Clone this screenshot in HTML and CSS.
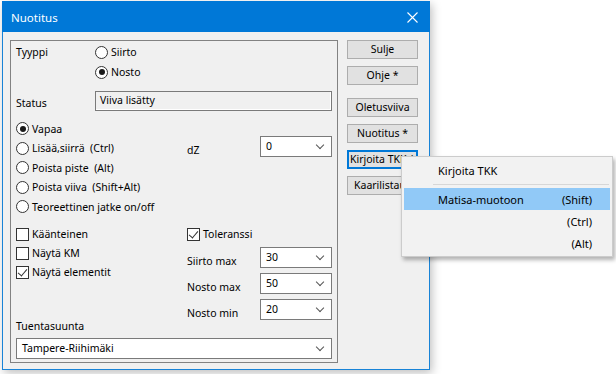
FILE: index.html
```html
<!DOCTYPE html>
<html>
<head>
<meta charset="utf-8">
<link rel="stylesheet" href="styles.css">
</head>
<body>
<div class="window">
  <div class="titlebar">
    <span class="title">Nuotitus</span>
    <svg class="close" width="11" height="11" viewBox="0 0 11 11"><path d="M0.5 0.5 L10.5 10.5 M10.5 0.5 L0.5 10.5" stroke="#fff" stroke-width="1.1" fill="none"/></svg>
  </div>
  <div class="client">
    <div class="group">
      <div class="type-row">
        <span class="label">Tyyppi</span>
        <div class="stack">
          <div class="opt"><span class="radio"></span>Siirto</div>
          <div class="opt"><span class="radio on"></span>Nosto</div>
        </div>
      </div>
      <div class="status-row">
        <span class="label status-label">Status</span>
        <div class="field">Viiva lisätty</div>
      </div>
      <div class="split mode">
        <div class="list">
          <div class="opt r"><span class="radio on"></span>Vapaa</div>
          <div class="opt r"><span class="radio"></span>Lisää,siirrä&nbsp; (Ctrl)</div>
          <div class="opt r"><span class="radio"></span>Poista piste&nbsp; (Alt)</div>
          <div class="opt r"><span class="radio"></span>Poista viiva&nbsp; (Shift+Alt)</div>
          <div class="opt r"><span class="radio"></span>Teoreettinen jatke on/off</div>
        </div>
        <div class="param dz">
          <span class="label plabel">dZ</span>
          <div class="combo">0<span class="chev"></span></div>
        </div>
      </div>
      <div class="split lower">
        <div class="list">
          <div class="opt c"><span class="check"></span>Käänteinen</div>
          <div class="opt c"><span class="check"></span>Näytä KM</div>
          <div class="opt c"><span class="check on"></span>Näytä elementit</div>
        </div>
        <div class="tol">
          <div class="opt c"><span class="check on"></span>Toleranssi</div>
          <div class="param first">
            <span class="label plabel">Siirto max</span>
            <div class="combo">30<span class="chev"></span></div>
          </div>
          <div class="param">
            <span class="label plabel">Nosto max</span>
            <div class="combo">50<span class="chev"></span></div>
          </div>
          <div class="param">
            <span class="label plabel">Nosto min</span>
            <div class="combo">20<span class="chev"></span></div>
          </div>
        </div>
      </div>
      <div class="label tuenta">Tuentasuunta</div>
      <div class="combo wide">Tampere-Riihimäki<span class="chev"></span></div>
    </div>
    <div class="buttons">
      <div class="btn">Sulje</div>
      <div class="btn">Ohje *</div>
      <div class="btn gap">Oletusviiva</div>
      <div class="btn">Nuotitus *</div>
      <div class="btn focus">Kirjoita TKK *</div>
      <div class="btn">Kaarilistaus</div>
    </div>
  </div>
</div>
<div class="menu">
  <div class="mi"><span>Kirjoita TKK</span><span></span></div>
  <div class="sep"></div>
  <div class="mi hl"><span>Matisa-muotoon</span><span>(Shift)</span></div>
  <div class="mi"><span></span><span>(Ctrl)</span></div>
  <div class="mi"><span></span><span>(Alt)</span></div>
</div>
</body>
</html>
```
FILE: styles.css
```css
* { box-sizing: border-box; }
body {
  margin: 0;
  width: 616px;
  height: 374px;
  overflow: hidden;
  position: relative;
  background: #fff;
  font-family: "Noto Sans", "Open Sans", sans-serif;
  font-size: 10.5px;
  color: #000;
}
.window {
  margin: 1px 0 0 2px;
  width: 428px;
  height: 369px;
  border: 1px solid #1883d7;
  background: #f0f0f0;
  box-shadow: 2px 3px 9px rgba(0,0,0,0.25);
}
.titlebar {
  height: 31px;
  margin: -1px -1px 0 -1px;
  padding: 1px 0 0 9px;
  background: #0078d7;
  display: flex;
  align-items: center;
  justify-content: space-between;
  color: #fff;
}
.title { font-size: 11.5px; }
.close { margin-right: 12px; margin-top: 1px; }
.client {
  display: flex;
  gap: 9px;
  padding: 8px 0 0 7px;
}
.group {
  width: 328px;
  height: 323px;
  border: 1px solid #828282;
  padding: 1px 5px 0 5px;
}
.label { line-height: 14px; white-space: nowrap; }
.type-row {
  display: grid;
  grid-template-columns: 79px 1fr;
}
.type-row .label { padding-top: 3px; }
.opt {
  display: flex;
  align-items: center;
  height: 20px;
  line-height: 14px;
  white-space: nowrap;
}
.opt.r { height: 19.5px; }
.opt.c { height: 19px; }
.radio {
  width: 13px;
  height: 13px;
  border: 1px solid #333;
  border-radius: 50%;
  background: #fff;
  margin-right: 3px;
  position: relative;
  flex: none;
}
.radio.on::after {
  content: "";
  position: absolute;
  left: 2.5px;
  top: 2.5px;
  width: 6px;
  height: 6px;
  border-radius: 50%;
  background: #1a1a1a;
}
.check {
  width: 13px;
  height: 13px;
  border: 1px solid #333;
  background: #fff;
  margin-right: 3px;
  position: relative;
  flex: none;
}
.check.on::after {
  content: "";
  position: absolute;
  left: 3px;
  top: 0px;
  width: 4px;
  height: 8px;
  border-right: 1px solid #333;
  border-bottom: 1px solid #333;
  transform: rotate(40deg);
}
.status-row {
  display: grid;
  grid-template-columns: 79px 1fr;
  margin-top: 9px;
}
.status-label { padding-top: 5px; }
.field {
  height: 20px;
  border: 1px solid #7a7a7a;
  box-shadow: inset -1px -1px 0 #fff;
  background: #f0f0f0;
  padding: 0 4px;
  line-height: 17px;
}
.split {
  display: grid;
  grid-template-columns: 171px 1fr;
  margin-top: 8px;
}
.dz { padding-top: 17px; align-self: start; }
.param {
  display: grid;
  grid-template-columns: 73px 72px;
  margin-top: 5px;
}
.param.first { margin-top: 3.5px; }
.param.dz { margin-top: 0; }
.plabel { padding-top: 7px; }
.combo {
  height: 21px;
  border: 1px solid #7a7a7a;
  background: #fff;
  padding: 0 5px;
  line-height: 18px;
  display: flex;
  justify-content: space-between;
  align-items: flex-start;
}
.chev {
  width: 6px;
  height: 6px;
  border-right: 1px solid #555;
  border-bottom: 1px solid #555;
  transform: rotate(45deg);
  margin: 5px 3px 0 0;
}
.tuenta { margin-top: -1.5px; }
.combo.wide { margin-top: 5px; width: 316px; }
.buttons {
  display: flex;
  flex-direction: column;
  gap: 7px;
}
.btn {
  width: 71px;
  height: 19px;
  border: 1px solid #adadad;
  background: #e1e1e1;
  text-align: center;
  line-height: 16px;
  white-space: nowrap;
  overflow: hidden;
  display: flex;
  justify-content: center;
}
.btn.gap { margin-top: 6px; }
.btn.focus {
  border-color: #0078d7;
  box-shadow: inset 0 0 0 1px #0078d7;
}
.menu {
  position: absolute;
  left: 401px;
  top: 156px;
  width: 212px;
  height: 101px;
  background: #f2f2f2;
  border: 1px solid #cccccc;
  box-shadow: 2px 3px 4px rgba(0,0,0,0.3);
  padding: 2px 2px;
}
.mi {
  height: 22px;
  display: flex;
  align-items: center;
  justify-content: space-between;
  padding: 0 18px 0 34px;
  font-size: 11px;
}
.mi.hl { background: #91c9f7; }
.sep {
  height: 1px;
  background: #d7d7d7;
  margin: 3px 1px 3px 29px;
}
```
